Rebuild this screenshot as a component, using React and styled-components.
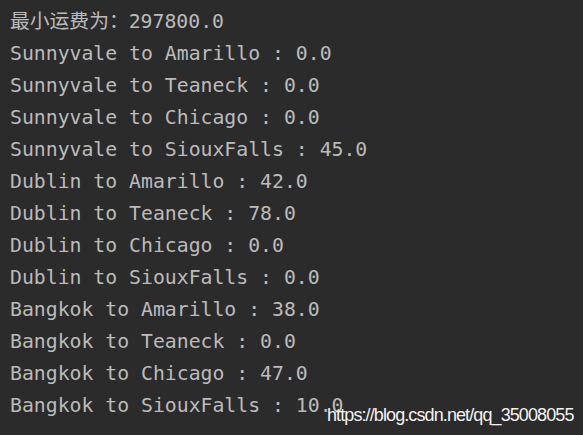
import React from "react";
import styled, { createGlobalStyle } from "styled-components";

const GlobalStyle = createGlobalStyle`
  html, body {
    margin: 0;
    padding: 0;
    background: #2b2b2b;
  }
`;

const Console = styled.div`
  position: relative;
  width: 583px;
  height: 435px;
  box-sizing: border-box;
  padding: 6px 0 0 10px;
  background: #2b2b2b;
  overflow: hidden;
`;

const Line = styled.div`
  height: 32px;
  line-height: 32px;
  color: #bbbbbb;
  font-family: "DejaVu Sans Mono", "Noto Sans CJK SC", monospace;
  font-size: 19.8px;
  white-space: pre;
`;

const Watermark = styled.span`
  position: absolute;
  left: 327px;
  top: 405px;
  color: #f2f2f2;
  font-family: "Liberation Sans", Arial, sans-serif;
  font-size: 18px;
  letter-spacing: -0.9px;
`;

const rows = [
  ["Sunnyvale", "Amarillo", "0.0"],
  ["Sunnyvale", "Teaneck", "0.0"],
  ["Sunnyvale", "Chicago", "0.0"],
  ["Sunnyvale", "SiouxFalls", "45.0"],
  ["Dublin", "Amarillo", "42.0"],
  ["Dublin", "Teaneck", "78.0"],
  ["Dublin", "Chicago", "0.0"],
  ["Dublin", "SiouxFalls", "0.0"],
  ["Bangkok", "Amarillo", "38.0"],
  ["Bangkok", "Teaneck", "0.0"],
  ["Bangkok", "Chicago", "47.0"],
  ["Bangkok", "SiouxFalls", "10.0"],
];

const App = () => {
  return (
    <Console>
      <GlobalStyle />
      <Line>最小运费为：297800.0</Line>
      {rows.map(([from, to, v]) => (
        <Line key={from + to}>{`${from} to ${to} : ${v}`}</Line>
      ))}
      <Watermark>https://blog.csdn.net/qq_35008055</Watermark>
    </Console>
  );
};

export default App;
